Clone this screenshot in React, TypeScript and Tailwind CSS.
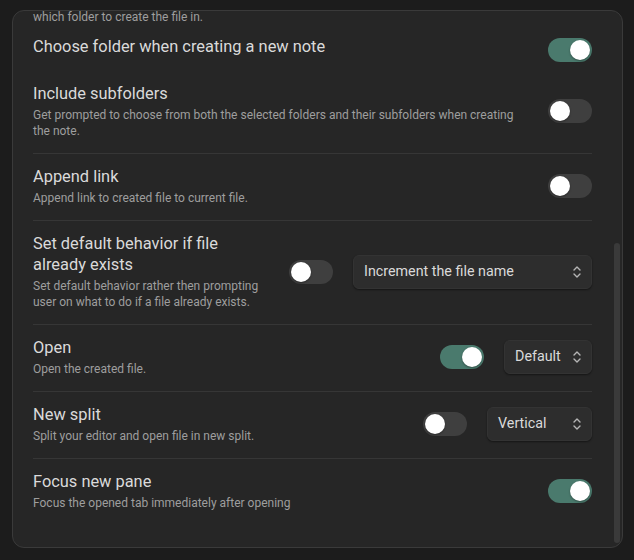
import React from 'react';

type Opt = { label: string; width: string };

const Toggle = ({ on }: { on: boolean }) => (
  <div
    className={`flex h-[24px] w-[44px] shrink-0 items-center rounded-full px-[2px] ${
      on ? 'justify-end bg-[#4a7a6d]' : 'justify-start bg-[#3f3f3f]'
    }`}
  >
    <div className="h-[20px] w-[20px] rounded-full bg-white shadow-[0_1px_2px_rgba(0,0,0,0.35)]" />
  </div>
);

const Dropdown = ({ opt }: { opt: Opt }) => (
  <div
    className={`flex h-[34px] shrink-0 items-center justify-between rounded-[6px] border border-[#333333] bg-[#2d2d2d] pl-[10px] pr-[9px] text-[14.3px] text-[#dadada] shadow-[0_1px_2px_rgba(0,0,0,0.45)] ${opt.width}`}
  >
    <span>{opt.label}</span>
    <svg width="10" height="14" viewBox="0 0 10 14" fill="none" stroke="#b5b5b5" strokeWidth="1.4" strokeLinecap="round" strokeLinejoin="round">
      <path d="M2 5l3-3 3 3" />
      <path d="M2 9l3 3 3-3" />
    </svg>
  </div>
);

const Setting = ({
  name,
  desc,
  on,
  opt,
  border = true,
}: {
  name: string;
  desc: string;
  on: boolean;
  opt?: Opt;
  border?: boolean;
}) => (
  <div className={`flex items-center pt-3 pb-[14px] ${border ? 'border-t border-[#363636]' : ''}`}>
    <div className="min-w-0 flex-1 pr-5">
      <div className="text-[16.4px] leading-[21px] text-[#dadada]">{name}</div>
      <div className="mt-[3px] text-[12px] leading-[16px] text-[#9e9e9e]">{desc}</div>
    </div>
    <div className="ml-auto flex shrink-0 items-center gap-5">
      <Toggle on={on} />
      {opt && <Dropdown opt={opt} />}
    </div>
  </div>
);

export default function App() {
  return (
    <div className="h-[560px] w-[634px] bg-[#1c1c1c] pt-[10px] pl-[12px] pr-[11px] pb-[12px] font-['Roboto',sans-serif]">
      <div className="flex h-full overflow-hidden rounded-[12px] border border-[#3a3a3a] bg-[#262626]">
        {/* settings list, scrolled a little */}
        <div className="flex-1 overflow-hidden pl-[20px] pr-[9px]">
          <div className="mt-[-2px] pb-[1px] text-[12px] leading-[16px] text-[#9e9e9e]">
            which folder to create the file in.
          </div>
          <div className="flex items-start pt-[10px] pb-[9px]">
            <div className="flex-1 text-[16.4px] leading-[21px] text-[#dadada]">
              Choose folder when creating a new note
            </div>
            <div className="mt-[2px]">
              <Toggle on={true} />
            </div>
          </div>
          <Setting
            border={false}
            name="Include subfolders"
            desc="Get prompted to choose from both the selected folders and their subfolders when creating the note."
            on={false}
          />
          <Setting name="Append link" desc="Append link to created file to current file." on={false} />
          <Setting
            name="Set default behavior if file already exists"
            desc="Set default behavior rather then prompting user on what to do if a file already exists."
            on={false}
            opt={{ label: 'Increment the file name', width: 'w-[239px]' }}
          />
          <Setting
            name="Open"
            desc="Open the created file."
            on={true}
            opt={{ label: 'Default', width: 'w-[88px]' }}
          />
          <Setting
            name="New split"
            desc="Split your editor and open file in new split."
            on={false}
            opt={{ label: 'Vertical', width: 'w-[105px]' }}
          />
          <Setting name="Focus new pane" desc="Focus the opened tab immediately after opening" on={true} />
        </div>
        {/* scrollbar */}
        <div className="flex w-[21px] shrink-0 justify-end pr-[2px]">
          <div className="mt-[232px] h-[300px] w-[6px] rounded-full bg-[#3a3a3a]" />
        </div>
      </div>
    </div>
  );
}
